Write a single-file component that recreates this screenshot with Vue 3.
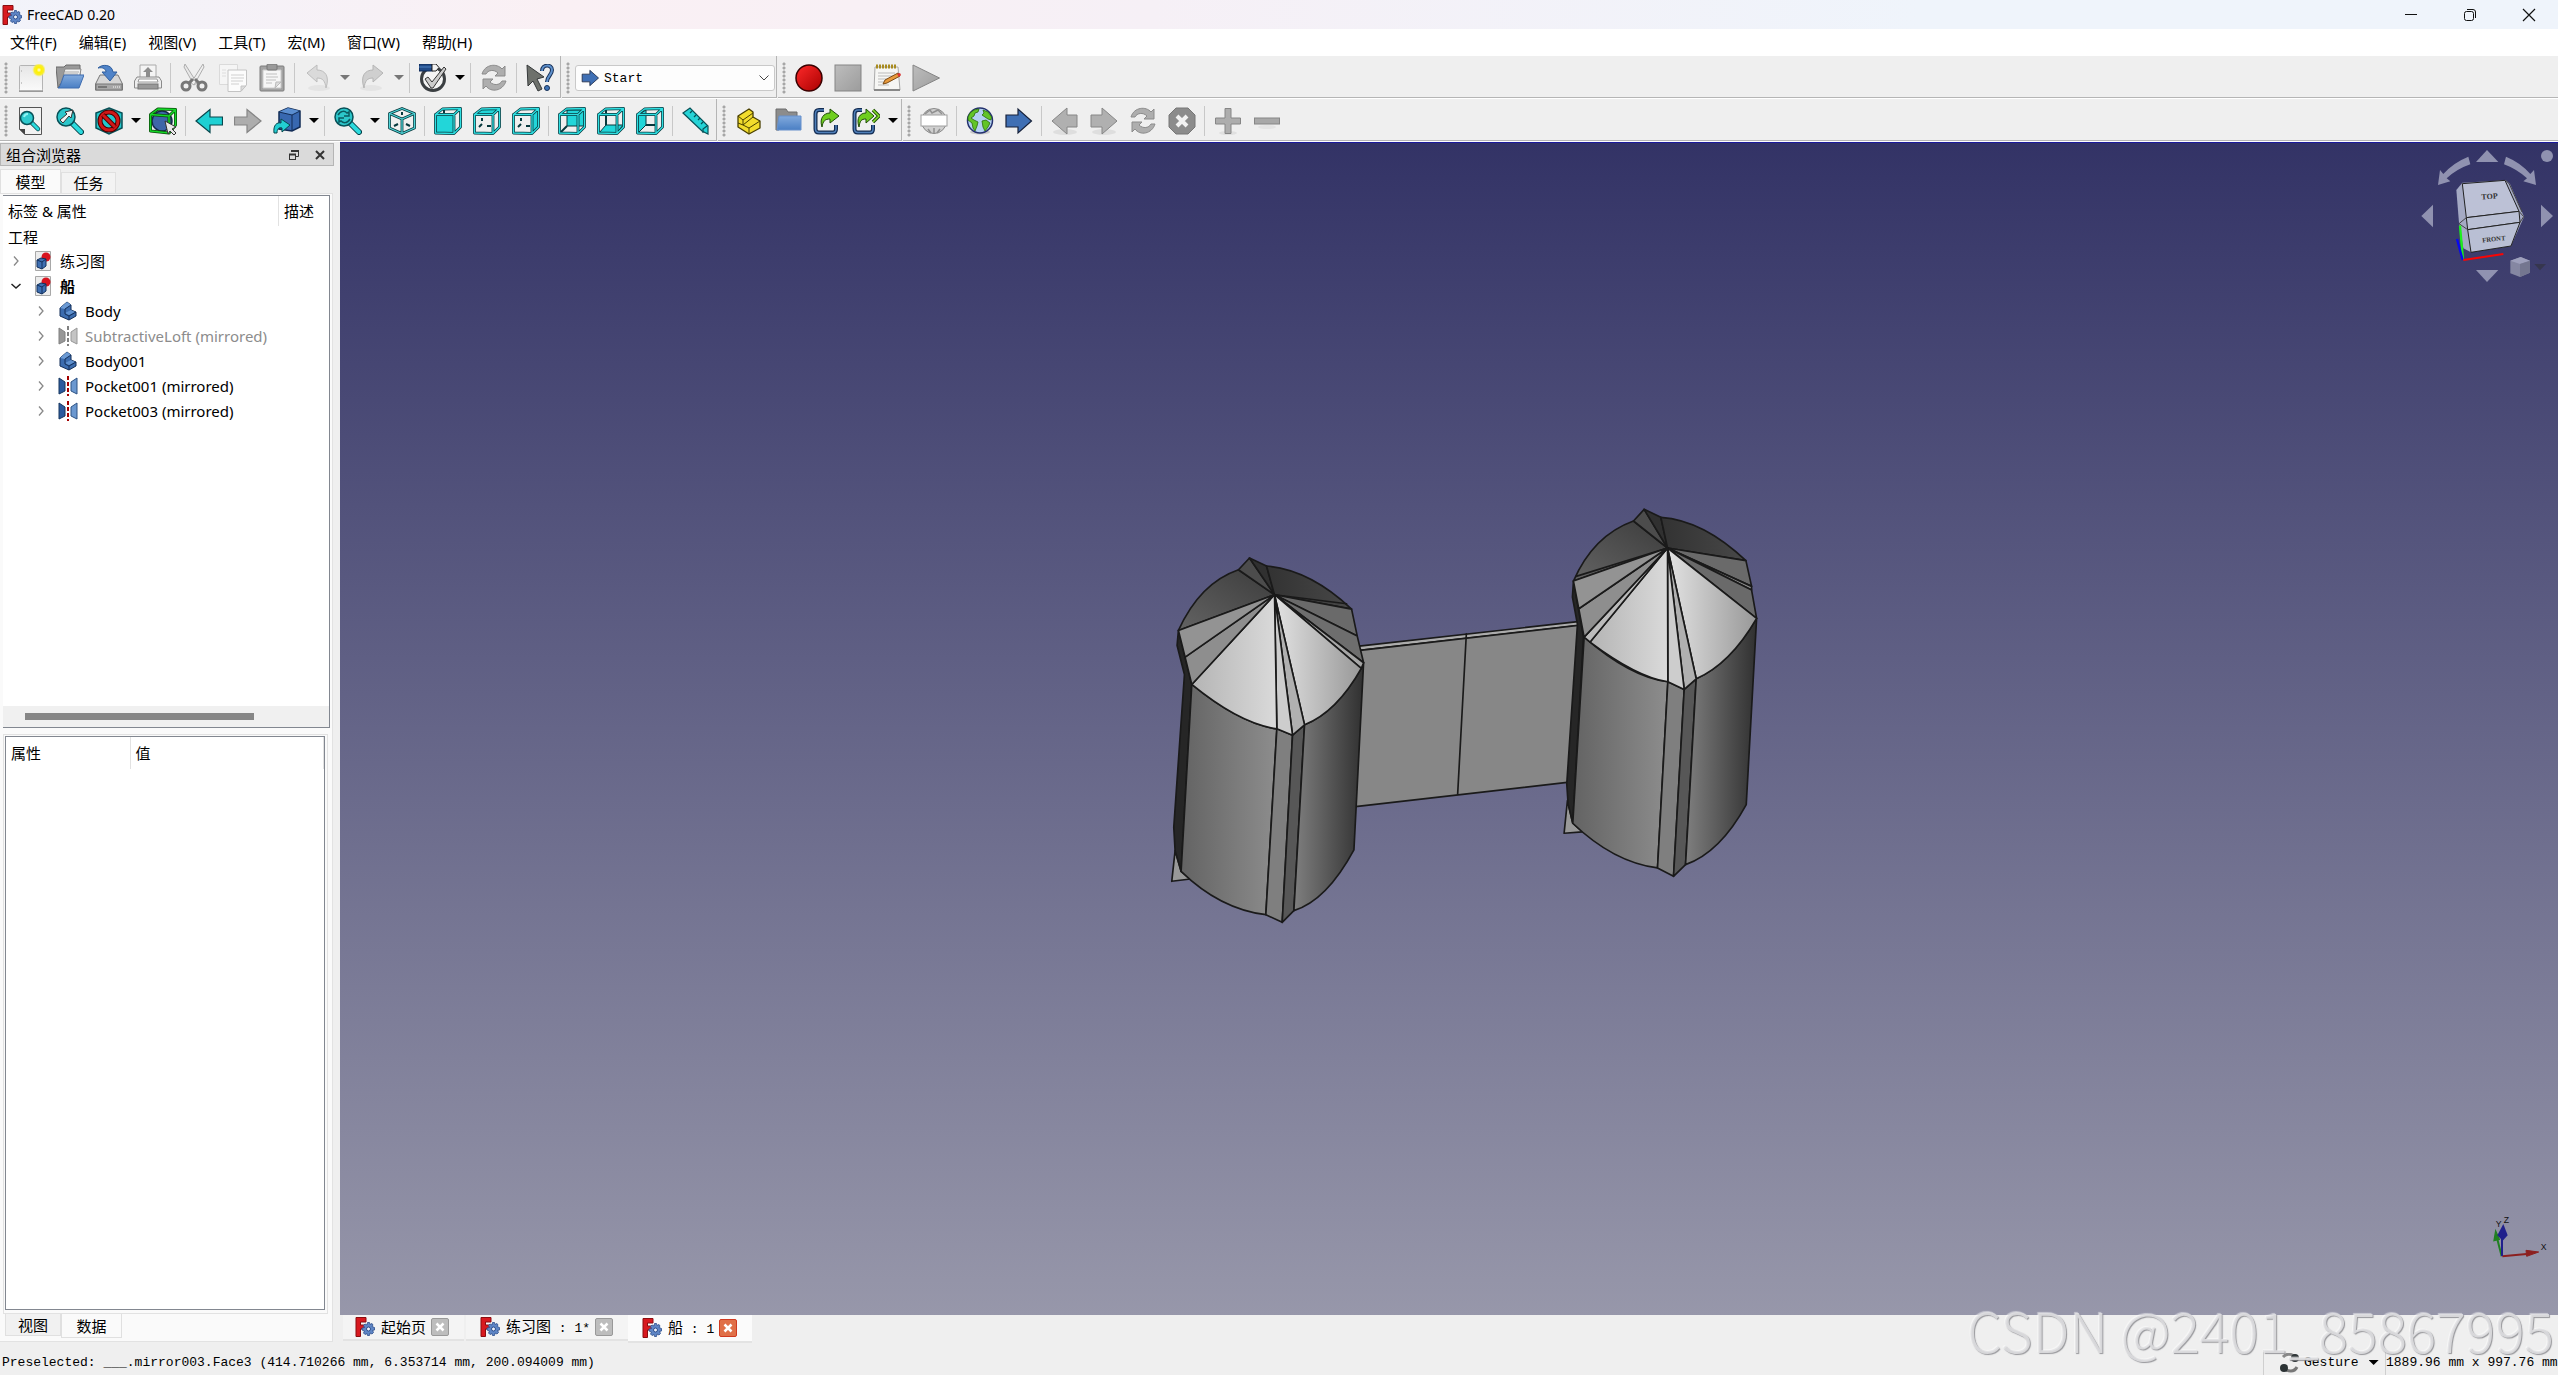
<script setup>
import { ref } from 'vue'

const menus = ['文件(F)', '编辑(E)', '视图(V)', '工具(T)', '宏(M)', '窗口(W)', '帮助(H)']

const b = (icon, label, menu) => ({ icon, label, menu })
const sep = { sep: true }

const fileTools = [
  b('new', '新建'), b('open', '打开'), b('save', '保存'), b('print', '打印'), sep,
  b('cut', '剪切'), b('copy', '复制'), b('paste', '粘贴'), sep,
  b('undo', '撤销', 'faint'), b('redo', '重做', 'faint'), sep,
  b('check', '检查', 'solid'), sep,
  b('refresh', '刷新'), sep,
  b('whats', '这是什么')
]
const macroTools = [b('record', '录制宏'), b('stop', '停止录制'), b('macro', '宏'), b('play', '执行宏')]
const viewTools = [
  b('fitall', '显示全部'), b('fitsel', '显示选择'), b('style', '显示样式', 'solid'), b('bbox', '边界框'), sep,
  b('back', '后退'), b('forward', '前进'), b('golink', '转到链接', 'solid'), sep,
  b('sync', '同步视图', 'solid'), b('iso', '轴测图'), sep,
  b('front', '前视'), b('top', '俯视'), b('right', '右视'), sep,
  b('rear', '后视'), b('bottom', '仰视'), b('left', '左视'), sep,
  b('ruler', '测量')
]
const structTools = [b('part', '部件'), b('group', '组'), b('link', '链接'), b('linkgroup', '链接组', 'solid')]
const webTools = [
  b('web', '网址'), sep, b('globe', '打开网站'), b('startarrow', '起始页'), sep,
  b('prev', '上一页'), b('next', '下一页'), b('refresh', '刷新'), b('halt', '停止'), sep,
  b('plus', '放大'), b('minus', '缩小')
]

const rows = [
  [{ tools: fileTools }, { combo: true, tools: [] }, { tools: macroTools, last: true }],
  [{ tools: viewTools }, { tools: structTools }, { tools: webTools, last: true }]
]

const tree = [
  { text: '练习图', icon: 'doc', level: 0 },
  { text: '船', icon: 'doc', level: 0, open: true, bold: true },
  { text: 'Body', icon: 'body', level: 1 },
  { text: 'SubtractiveLoft (mirrored)', icon: 'mirrorgray', level: 1, gray: true },
  { text: 'Body001', icon: 'body', level: 1 },
  { text: 'Pocket001 (mirrored)', icon: 'mirror', level: 1 },
  { text: 'Pocket003 (mirrored)', icon: 'mirror', level: 1 }
]

const docs = [
  { name: '起始页', tail: '' },
  { name: '练习图', tail: ' : 1*' },
  { name: '船', tail: ' : 1', active: true }
]
const workbench = ref('Start')
</script>

<template>
  <div class="app">
    <svg class="defs" width="0" height="0" aria-hidden="true">
      <defs>
        <linearGradient id="gBlue" x1="0" y1="0" x2="0" y2="1"><stop offset="0" stop-color="#82aadd" /><stop offset="1" stop-color="#4a7fc4" /></linearGradient>
        <linearGradient id="gGray" x1="0" y1="0" x2="1" y2="1"><stop offset="0" stop-color="#bdbdbd" /><stop offset="1" stop-color="#9c9c9c" /></linearGradient>
        <linearGradient id="gRed" x1="0" y1="0" x2="1" y2="1"><stop offset="0" stop-color="#ff2a2a" /><stop offset="1" stop-color="#a80000" /></linearGradient>
        <linearGradient id="gPage" x1="0" y1="0" x2="0" y2="1"><stop offset="0" stop-color="#e6e6e6" /><stop offset="1" stop-color="#fafafa" /></linearGradient>
        <radialGradient id="gSun"><stop offset="0" stop-color="#fffde0" /><stop offset=".35" stop-color="#fff000" /><stop offset=".7" stop-color="#f8ee30" /><stop offset="1" stop-color="#f8f080" stop-opacity="0" /></radialGradient>
        <linearGradient id="cLeft"><stop offset="0" stop-color="#b4b4b4" /><stop offset="1" stop-color="#dadada" /></linearGradient>
        <linearGradient id="cRight"><stop offset="0" stop-color="#e2e2e2" /><stop offset="1" stop-color="#989898" /></linearGradient>
        <linearGradient id="cBackL" x1="0" y1="1" x2="1" y2="0"><stop offset="0" stop-color="#636363" /><stop offset="1" stop-color="#3c3c3c" /></linearGradient>
        <linearGradient id="cBackR"><stop offset="0" stop-color="#323232" /><stop offset="1" stop-color="#484848" /></linearGradient>
        <linearGradient id="wLeft"><stop offset="0" stop-color="#636363" /><stop offset="1" stop-color="#8d8d8d" /></linearGradient>
        <linearGradient id="wRight"><stop offset="0" stop-color="#7f7f7f" /><stop offset="1" stop-color="#303030" /></linearGradient>
      </defs>

      <symbol id="i-logo" viewBox="0 0 20 20">
        <path d="M1 .500H11V5H5.500V8H9.500V12H5.500V19.500H1Z" fill="#d8191f" stroke="#8a0d10" />
        <path d="M12.500 5.500H14.500L15 7.500L17 6.500L18 8L17 9.500L19.500 10.500V13L17.500 13.500L18.500 15.500L17 17L15 16L14.500 18.500H12.500L12 16.500L10 17.500L8.500 16L9.500 14L7 13V11L9.500 10.500L8.500 8.500L10 7L12 8Z" fill="#5f86c6" stroke="#2c4d8a" stroke-width=".800" />
        <circle cx="13.500" cy="12" r="2" fill="#eef2fa" stroke="#2c4d8a" />
      </symbol>

      <symbol id="i-new" viewBox="0 0 28 28">
        <path d="M2 27H26" stroke="#9a9a9a" stroke-width="2" /><rect x="2.500" y="1.500" width="23" height="25" rx="1" fill="url(#gPage)" stroke="#b4b4b4" />
        <path d="M4.500 6V8M4.500 18V20" stroke="#c8c8c8" /><circle cx="22" cy="6" r="7" fill="url(#gSun)" />
      </symbol>
      <symbol id="i-open" viewBox="0 0 28 28">
        <path d="M0 3H8L10 1H24V20H4L2 24Z" fill="#9a9a9a" stroke="#6b6b6b" /><path d="M9 5H25L23 16H6Z" fill="#f2f2f2" stroke="#888" /><path d="M9 8H23M8 10H22" stroke="#aaa" />
        <path d="M8 11H28L23 24H2L4 22Z" fill="url(#gBlue)" stroke="#3e6cb0" />
      </symbol>
      <symbol id="i-save" viewBox="0 0 28 28">
        <path d="M5 11H23L27.500 20V26H.500V20Z" fill="#d6d6d6" stroke="#777" /><rect x="1" y="20" width="26" height="6" fill="#a8a8a8" stroke="#777" /><path d="M3 23H12" stroke="#777" stroke-width="2" /><path d="M18 23H25" stroke="#d0d0d0" stroke-width="2" stroke-dasharray="1 1" />
        <path d="M3 4C7 0 17 0 18 8H22L15 17L7 8H11C11 5 8 3 3 4Z" fill="#4f83c8" stroke="#315f9e" />
      </symbol>
      <symbol id="i-print" viewBox="0 0 28 28">
        <path d="M6 1H22V16H6Z" fill="#f4f4f4" stroke="#aaa" /><path d="M14 3L19 8H16V13H12V8H9Z" fill="#8d8d8d" /><path d="M3 13H25L27.500 17V24H.500V17Z" fill="#ededed" stroke="#8a8a8a" /><path d="M5 15H23L24 18H4Z" fill="#fff" stroke="#999" /><rect x="4" y="20" width="20" height="5" fill="#999" stroke="#777" />
      </symbol>
      <symbol id="i-cut" viewBox="0 0 28 28">
        <path d="M5 0L17 19L14 21L4 3Z" fill="#e8e8e8" stroke="#adadad" /><path d="M23 0L11 19L14 21L24 3Z" fill="#f0f0f0" stroke="#adadad" /><circle cx="6" cy="22" r="4" fill="none" stroke="#777" stroke-width="3" /><circle cx="22" cy="22" r="4" fill="none" stroke="#777" stroke-width="3" /><path d="M9 19L13 15M19 19L15 15" stroke="#777" stroke-width="3" />
      </symbol>
      <symbol id="i-copy" viewBox="0 0 28 28">
        <path d="M.500.500H18.500V20.500H.500Z" fill="#f5f5f5" stroke="#dadada" /><path d="M3 6H7M3 9H7M3 12H7" stroke="#ddd" /><path d="M9 6H27.500V21L22 27.500H9Z" fill="#fcfcfc" stroke="#c4c4c4" /><path d="M12 11H25M12 14H25M12 17H24M12 20H20" stroke="#d0d0d0" /><path d="M22 27V22H27Z" fill="#ddd" stroke="#c4c4c4" />
      </symbol>
      <symbol id="i-paste" viewBox="0 0 28 28">
        <rect x="2" y="2" width="24" height="25" rx="1" fill="#a3a3a3" stroke="#7d7d7d" /><path d="M5 6H23V24H5Z" fill="#f6f6f6" stroke="#ccc" /><rect x="9" y="0" width="10" height="6" rx="1" fill="#9a9a9a" stroke="#777" /><path d="M8 10H19M8 13H20M8 16H18M8 19H14" stroke="#c0c0c0" /><path d="M17 24L18 18H23Z" fill="#ddd" stroke="#bbb" />
      </symbol>
      <symbol id="i-undo" viewBox="0 0 28 28">
        <ellipse cx="15" cy="24" rx="11" ry="3" fill="#e4e4e4" /><path d="M3 9L13 1V6C21 6 26 12 22 24C21 17 19 14 13 14V18Z" fill="#dadada" stroke="#bdbdbd" />
      </symbol>
      <symbol id="i-redo" viewBox="0 0 28 28">
        <ellipse cx="13" cy="24" rx="11" ry="3" fill="#e4e4e4" /><path d="M25 9L15 1V6C7 6 2 12 6 24C7 17 9 14 15 14V18Z" fill="#cfcfcf" stroke="#b5b5b5" />
      </symbol>
      <symbol id="i-check" viewBox="0 0 28 28">
        <circle cx="14" cy="15" r="11.500" fill="#f4f4f4" stroke="#3b3f42" stroke-width="3" /><rect x="0" y="0" width="13" height="7" fill="#204a87" stroke="#0b2550" /><path d="M0 3H13" stroke="#4d80c0" /><path d="M13 0H17L20 3.500L17 7H13Z" fill="#f2f2f2" stroke="#222" /><path d="M6 15L9 13L13 18L25 3L27 5L14 24H12Z" fill="#ccc" stroke="#333" />
      </symbol>
      <symbol id="i-refresh" viewBox="0 0 28 28">
        <path d="M2 10C5 0 17-1 22 5L25 2V12H15L18 9C14 5 8 6 6 10Z" fill="#aeaeae" stroke="#8b8b8b" /><path d="M26 17C23 27 11 29 6 22L3 25V15H13L10 18C14 22 20 21 22 17Z" fill="#aeaeae" stroke="#8b8b8b" />
      </symbol>
      <symbol id="i-whats" viewBox="0 0 28 28">
        <path d="M1 1L18 13L11 15L16 25L12 27L7 17L2 22Z" fill="#6e716c" stroke="#35393a" /><path d="M16 7C16 0 26 0 26 6C26 11 21 12 21 18" fill="none" stroke="#173057" stroke-width="4" /><path d="M16 7C16 0 26 0 26 6C26 11 21 12 21 18" fill="none" stroke="#5d90cc" stroke-width="2" /><circle cx="21" cy="24" r="2.500" fill="#3d74b8" stroke="#173057" />
      </symbol>
      <symbol id="i-record" viewBox="0 0 28 28"><circle cx="14" cy="14" r="13" fill="url(#gRed)" stroke="#3a0000" stroke-width="1.500" /></symbol>
      <symbol id="i-stop" viewBox="0 0 28 28"><rect x="1" y="1" width="26" height="26" fill="url(#gGray)" stroke="#858585" /></symbol>
      <symbol id="i-macro" viewBox="0 0 28 28">
        <path d="M2 3H25L27 26H1Z" fill="#f6f6f4" stroke="#aaa" /><path d="M1 26H27" stroke="#888" stroke-width="2" /><path d="M3 2.500H24" stroke="#a88b20" stroke-width="4" stroke-dasharray="2 1" /><path d="M5 9H22M5 12H22M5 15H20M5 18H12M5 21H16" stroke="#bbb" /><path d="M10 20L12 16L25 9L27 12L14 19Z" fill="#e89a3c" stroke="#7a4a14" /><path d="M24 10L27 9L28 11L26 13Z" fill="#d33" />
      </symbol>
      <symbol id="i-play" viewBox="0 0 28 28"><path d="M1 1L27.500 14L1 27Z" fill="url(#gGray)" stroke="#858585" /></symbol>

      <symbol id="i-fitall" viewBox="0 0 28 28">
        <path d="M2.500.500H24.500V27.500H8L2.500 22Z" fill="#f2f2f2" stroke="#555" /><path d="M2 22H8V28Z" fill="#444" /><path d="M14 15L21 22" stroke="#063f46" stroke-width="4.500" stroke-linecap="round" /><path d="M14 15L21 22" stroke="#2cdadd" stroke-width="3" stroke-linecap="round" /><circle cx="10" cy="11" r="6.500" fill="#2fc9cd" stroke="#075057" stroke-width="1.500" /><path d="M7 10A4 4 0 0 1 11 7" stroke="#8ff4f4" stroke-width="2" fill="none" />
      </symbol>
      <symbol id="i-fitsel" viewBox="0 0 28 28">
        <path d="M15 15L25 25" stroke="#063f46" stroke-width="6" stroke-linecap="round" /><path d="M15 15L25 25" stroke="#2cdadd" stroke-width="4" stroke-linecap="round" /><circle cx="10" cy="10" r="9" fill="#2cc6ca" stroke="#075057" stroke-width="1.500" /><path d="M4 13L11 7L9 5L17 3L15 11L13 9L7 16Z" fill="#f4f4f4" stroke="#333" />
      </symbol>
      <symbol id="i-style" viewBox="0 0 28 28">
        <path d="M14 1L27 6V21L14 27L1 21V6Z" fill="#22c8cc" stroke="#075057" stroke-width="1.500" /><circle cx="14" cy="14" r="9" fill="none" stroke="#4c0000" stroke-width="5" /><circle cx="14" cy="14" r="9" fill="none" stroke="#d01818" stroke-width="3" /><path d="M8 8L20 20" stroke="#4c0000" stroke-width="5" /><path d="M8 8L20 20" stroke="#d01818" stroke-width="3" />
      </symbol>
      <symbol id="i-bbox" viewBox="0 0 28 28">
        <circle cx="13" cy="14" r="10" fill="#3e66a8" stroke="#14284a" stroke-width="1.500" /><g fill="none" stroke-linejoin="round"><path d="M1.500 7.500L20 9V26L1.500 24ZM1.500 7.500L9 2L26.500 2.500L20 9M26.500 2.500V18L20 26" stroke="#0a4a0a" stroke-width="3" /><path d="M1.500 7.500L20 9V26L1.500 24ZM1.500 7.500L9 2L26.500 2.500L20 9M26.500 2.500V18L20 26" stroke="#14d628" stroke-width="1.500" /></g><path d="M16 14L27 20L23 22L27 26L25 28L21 24L19 27Z" fill="#e8e8e8" stroke="#333" />
      </symbol>
      <symbol id="i-back" viewBox="0 0 28 28"><path d="M1 14L15 2.500V10H27.500V18H15V25.500Z" fill="#1fd0d3" stroke="#08474c" stroke-width="1.200" /></symbol>
      <symbol id="i-forward" viewBox="0 0 28 28"><path d="M27 14L13 2.500V10H.500V18H13V25.500Z" fill="#adadad" stroke="#858585" stroke-width="1.200" /></symbol>
      <symbol id="i-golink" viewBox="0 0 28 28">
        <path d="M6 5L15 1L27 4V20L19 24L6 22Z" fill="#3868b0" stroke="#122c56" stroke-width="1.500" /><path d="M6 5L15 1L27 4L19 8Z" fill="#5a8ed0" /><path d="M6 5L19 8L27 4M19 8V24" stroke="#122c56" fill="none" /><path d="M1 26C0 18 4 15 8 16V12L17 18L9 25V21C6 20 4 22 4 26Z" fill="#22ced2" stroke="#08474c" />
      </symbol>
      <symbol id="i-sync" viewBox="0 0 28 28">
        <path d="M15 15L25 25" stroke="#063f46" stroke-width="6" stroke-linecap="round" /><path d="M15 15L25 25" stroke="#2cdadd" stroke-width="4" stroke-linecap="round" /><circle cx="10" cy="10" r="9" fill="#2cc6ca" stroke="#075057" stroke-width="1.500" /><path d="M4 8C7 3 11 4 13 6L15 5V9H10M16 12C13 17 9 16 7 14L5 15V11H10" fill="none" stroke="#0b5a60" stroke-width="1.500" />
      </symbol>
      <symbol id="edges" viewBox="0 0 28 28">
        <g fill="none" stroke-linejoin="round"><path d="M1.500 7.500H20V26.500L1.500 26ZM1.500 7.500L8.500 2L26.500 1.500L20 7.500M26.500 1.500V20L20 26.500" stroke="#06383d" stroke-width="2.800" /><path d="M1.500 7.500H20V26.500L1.500 26ZM1.500 7.500L8.500 2L26.500 1.500L20 7.500M26.500 1.500V20L20 26.500" stroke="#2fe0e3" stroke-width="1.300" /></g>
      </symbol>
      <symbol id="i-iso" viewBox="0 0 28 28">
        <g fill="none" stroke-linejoin="round"><path d="M14 1.500L26.500 6.500V21L14 26.500L1.500 21V6.500ZM1.500 6.500L14 12L26.500 6.500M14 12V26" stroke="#06383d" stroke-width="2.800" /><path d="M14 1.500L26.500 6.500V21L14 26.500L1.500 21V6.500ZM1.500 6.500L14 12L26.500 6.500M14 12V26" stroke="#4fd5d8" stroke-width="1.300" /><path d="M14 5V8M6 19L10 17M22 19L18 17" stroke="#06383d" stroke-width="2" /></g>
      </symbol>
      <symbol id="i-front" viewBox="0 0 28 28"><path d="M2 8H20V26H2Z" fill="#22d6d9" /><path d="M10 3V7" stroke="#06383d" stroke-width="2" /><use href="#edges" /></symbol>
      <symbol id="i-top" viewBox="0 0 28 28"><path d="M2 8L8 2H26L20 8Z" fill="#22d6d9" /><path d="M9 11V14M9 17L6 20M14 19H18" stroke="#06383d" stroke-width="2" /><use href="#edges" /></symbol>
      <symbol id="i-right" viewBox="0 0 28 28"><path d="M20 8L26 2V20L20 26Z" fill="#22d6d9" /><path d="M9 11V14M9 17L6 20M14 19H18" stroke="#06383d" stroke-width="2" /><use href="#edges" /></symbol>
      <symbol id="i-rear" viewBox="0 0 28 28"><path d="M9 3H26V19H9Z" fill="#22d6d9" stroke="#06383d" /><path d="M9 19L2 26" stroke="#06383d" stroke-width="2" /><use href="#edges" /></symbol>
      <symbol id="i-bottom" viewBox="0 0 28 28"><path d="M2 26L9 18H26L20 26Z" fill="#22d6d9" stroke="#06383d" /><path d="M9 3V18" stroke="#06383d" stroke-width="2" /><use href="#edges" /></symbol>
      <symbol id="i-left" viewBox="0 0 28 28"><path d="M2 8L10 3V18L2 26Z" fill="#22d6d9" stroke="#06383d" /><path d="M10 18H20" stroke="#06383d" stroke-width="2" /><use href="#edges" /></symbol>
      <symbol id="i-ruler" viewBox="0 0 28 28"><path d="M1 6L8 1L26 19V27L20 24Z" fill="#25d3d6" stroke="#075057" stroke-width="1.200" /><path d="M10 4L8 6M14 8L12 10M18 11L16 13M21 15L19 17M25 19L21 22V26" stroke="#075057" stroke-width="1.200" fill="none" /></symbol>

      <symbol id="i-part" viewBox="0 0 28 28">
        <path d="M3 9L14 2L18 5V10L25 14V21L14 27L3 20Z" fill="#f2dc2c" stroke="#4a4000" stroke-width="1.300" stroke-linejoin="round" /><path d="M3 9L8 13L18 6M8 13V18L3 16M8 18L14 21V27M14 21L25 14M8 18L18 10" stroke="#4a4000" fill="none" />
      </symbol>
      <symbol id="i-group" viewBox="0 0 28 28"><path d="M2 2H12L14 5H23V14H5V23H2Z" fill="#8c8c8c" stroke="#6c6c6c" /><path d="M5 9H27V23H3Z" fill="url(#gBlue)" stroke="#6690cc" /></symbol>
      <symbol id="i-link" viewBox="0 0 28 28">
        <path d="M11 3H6Q2.500 3 2.500 7V22Q2.500 25.500 6 25.500H20Q23 25.500 23 22V18" fill="none" stroke="#132c52" stroke-width="4" /><path d="M11 3H6Q2.500 3 2.500 7V22Q2.500 25.500 6 25.500H20Q23 25.500 23 22V18" fill="none" stroke="#4f7fb9" stroke-width="1.500" /><path d="M9 20C6 11 11 6 17 6V2L26 9L17 16V12C12 12 10 14 9 20Z" fill="#6fce1e" stroke="#1f4d06" />
      </symbol>
      <symbol id="i-linkgroup" viewBox="0 0 28 28">
        <path d="M10 3H6Q2.500 3 2.500 7V22Q2.500 25.500 6 25.500H18Q21 25.500 21 22V18" fill="none" stroke="#132c52" stroke-width="4" /><path d="M10 3H6Q2.500 3 2.500 7V22Q2.500 25.500 6 25.500H18Q21 25.500 21 22V18" fill="none" stroke="#4f7fb9" stroke-width="1.500" /><path d="M7 20C4 11 8 6 14 6V2L22 9L14 16V12C9 12 8 14 7 20Z" fill="#6fce1e" stroke="#1f4d06" /><path d="M21 3L27 9L21 15" fill="none" stroke="#1f4d06" stroke-width="3.500" /><path d="M21 3L27 9L21 15" fill="none" stroke="#8be030" stroke-width="1.500" />
      </symbol>
      <symbol id="i-web" viewBox="0 0 28 28"><circle cx="14" cy="14" r="12.500" fill="#cfcfcf" stroke="#888" /><path d="M5 7L10 3L12 6L18 3L22 7M8 22L11 26M20 22L17 26M14 21V26" stroke="#909090" fill="none" stroke-width="1.500" /><rect x="1" y="8" width="26" height="11" fill="#fff" stroke="#a0a0a0" /></symbol>
      <symbol id="i-globe" viewBox="0 0 28 28"><ellipse cx="14" cy="25" rx="10" ry="2.500" fill="#c9c9c9" /><circle cx="14" cy="13.500" r="12.500" fill="#b4d0f2" stroke="#23306e" stroke-width="1.500" /><path d="M2 10L4 6L8 3L13 2L12 5L9 6L8 9L5 11L8 13L12 15L11 19L9 24L7 21L6 16L2 13Z" fill="#62c428" stroke="#2a6c0a" stroke-width=".800" /><path d="M17 3L22 5L25.500 10L25 13L22 12L19 10L16 8L18 6ZM16 14L20 13L24 16L22 20L19 24L17 20Z" fill="#62c428" stroke="#2a6c0a" stroke-width=".800" /></symbol>
      <symbol id="i-startarrow" viewBox="0 0 28 28"><path d="M1 8H13V2L26.500 14L13 26V20H1Z" fill="#3f6fb4" stroke="#16213a" stroke-width="1.200" /></symbol>
      <symbol id="i-prev" viewBox="0 0 28 28"><ellipse cx="14" cy="25" rx="12" ry="3" fill="#dedede" /><path d="M1 14L16 1V8H26V20H16V27Z" fill="#b0b0b0" stroke="#868686" /></symbol>
      <symbol id="i-next" viewBox="0 0 28 28"><ellipse cx="14" cy="25" rx="12" ry="3" fill="#dedede" /><path d="M27 14L12 1V8H1V20H12V27Z" fill="#b0b0b0" stroke="#868686" /></symbol>
      <symbol id="i-halt" viewBox="0 0 28 28"><path d="M8 1H20L27 8V20L20 27H8L1 20V8Z" fill="#8c8c8c" stroke="#777" /><path d="M9 9L19 19M19 9L9 19" stroke="#f2f2f2" stroke-width="4" /></symbol>
      <symbol id="i-plus" viewBox="0 0 28 28"><ellipse cx="14" cy="26" rx="9" ry="2" fill="#e0e0e0" /><path d="M11 1.500H17V11H26.500V17H17V26.500H11V17H1.500V11H11Z" fill="#adadad" stroke="#868686" /></symbol>
      <symbol id="i-minus" viewBox="0 0 28 28"><ellipse cx="14" cy="20" rx="9" ry="2" fill="#e4e4e4" /><rect x="1.500" y="11" width="25" height="6" fill="#a8a8a8" stroke="#868686" /></symbol>

      <symbol id="i-doc" viewBox="0 0 20 20"><path d="M2.500.500H17.500V19.500H2.500Z" fill="#ececec" stroke="#a8a8a8" /><circle cx="13" cy="6" r="4.500" fill="#d81420" /><path d="M4 9L8 7L13 8V15L9 18L4 16Z" fill="#3e6fb2" stroke="#12305c" /><path d="M4 9L9 11L13 8M9 11V18" fill="none" stroke="#12305c" /></symbol>
      <symbol id="i-body" viewBox="0 0 20 20"><path d="M2 7L9 1L13 4V9L18 11V15L11 19L2 15Z" fill="#3c6cae" stroke="#142f58" /><path d="M2 7L9 1L13 4L7 8Z" fill="#6b9ad4" /><path d="M7 12L13 9L17 11L11 14Z" fill="#5f90ce" /><path d="M7 8L13 4M7 8V13L11 15L18 11M11 15V19" stroke="#142f58" fill="none" /></symbol>
      <symbol id="i-mirror" viewBox="0 0 20 20"><path d="M1 2L7 6V15L1 18Z" fill="#2c5a9e" stroke="#17365f" /><path d="M19 2L13 6V15L19 18Z" fill="#6b98d0" stroke="#2e5384" /><path d="M10 0V20" stroke="#a40000" stroke-width="2" stroke-dasharray="4 2" /></symbol>
      <symbol id="i-mirrorgray" viewBox="0 0 20 20"><path d="M1 2L7 6V15L1 18Z" fill="#989898" stroke="#808080" /><path d="M19 2L13 6V15L19 18Z" fill="#c4c4c4" stroke="#989898" /><path d="M10 0V20" stroke="#808080" stroke-width="2" stroke-dasharray="4 2" /></symbol>
    </svg>

    <header class="title">
      <svg class="logo"><use href="#i-logo" /></svg>
      <span class="name">FreeCAD 0.20</span>
      <div class="win">
        <button aria-label="最小化"><svg width="14" height="14"><path d="M1 6.500H13" stroke="#111" /></svg></button>
        <button aria-label="还原"><svg width="14" height="14" fill="none" stroke="#111"><rect x="1.500" y="3.500" width="9" height="9" rx="2" /><path d="M4 1.500H10Q12.500 1.500 12.500 4V10" /></svg></button>
        <button aria-label="关闭"><svg width="14" height="14"><path d="M1 1L13 13M13 1L1 13" stroke="#111" stroke-width="1.200" /></svg></button>
      </div>
    </header>

    <nav class="menu"><button v-for="m in menus" :key="m">{{ m }}</button></nav>

    <div v-for="(row, r) in rows" :key="r" class="toolrow">
      <div v-for="(g, n) in row" :key="n" class="group" :class="{ last: g.last }">
        <i class="grip"></i>
        <label v-if="g.combo" class="combo">
          <svg class="comboicon"><use href="#i-startarrow" /></svg>
          <select v-model="workbench" aria-label="工作台"><option>Start</option></select>
          <svg class="chev" width="10" height="6"><path d="M.500.500L5 5L9.500.500" fill="none" stroke="#444" /></svg>
        </label>
        <template v-for="(t, k) in g.tools" :key="k">
          <i v-if="t.sep" class="sep"></i>
          <button v-else class="tool" :class="{ wide: t.menu }" :aria-label="t.label">
            <svg class="ic"><use :href="'#i-' + t.icon" /></svg>
            <i v-if="t.menu" class="caret" :class="t.menu"></i>
          </button>
        </template>
      </div>
    </div>

    <main class="main">
      <aside class="side">
        <div class="docktitle">
          <span>组合浏览器</span>
          <button aria-label="浮动"><svg width="12" height="12"><path d="M3.500 3V1.500H10.500V7.500H8" fill="none" stroke="#333" /><path d="M3 2H11" stroke="#333" stroke-width="2" /><rect x="1.500" y="5.500" width="6" height="5" fill="none" stroke="#333" /><path d="M1 5.500H8" stroke="#333" stroke-width="2" /></svg></button>
          <button aria-label="关闭"><svg width="12" height="12"><path d="M2 2L10 10M10 2L2 10" stroke="#333" stroke-width="2" /></svg></button>
        </div>
        <div class="toptabs"><button class="on">模型</button><button>任务</button></div>
        <div class="panel">
          <section class="tree">
            <div class="thead"><span>标签 &amp; 属性</span><span>描述</span></div>
            <div class="root">工程</div>
            <ul>
              <li v-for="t in tree" :key="t.text" :class="['lv' + t.level, { bold: t.bold, gray: t.gray }]">
                <svg class="tw" width="12" height="12"><path v-if="t.open" d="M1.500 4L6 8L10.500 4" stroke="#222" stroke-width="1.500" fill="none" /><path v-else d="M4 1.500L8 6L4 10.500" stroke="#888" stroke-width="1.300" fill="none" /></svg>
                <svg class="ti"><use :href="'#i-' + t.icon" /></svg>
                <span>{{ t.text }}</span>
              </li>
            </ul>
            <div class="hscroll"><i></i></div>
          </section>
          <section class="props">
            <div class="propbox">
              <table><thead><tr><th>属性</th><th>值</th></tr></thead></table>
            </div>
          </section>
          <div class="bottomtabs"><button>视图</button><button class="on">数据</button></div>
        </div>
      </aside>

      <section class="work">
        <div class="scene">
          <svg class="model" viewBox="0 0 2218 1172" preserveAspectRatio="xMidYMid slice">
            <g stroke="#1a1a1a" stroke-width="5" stroke-linejoin="round" stroke-linecap="round">
              <g transform="translate(1010 458) scale(.333333)">
                <path d="M21 138L690 63V75L30 150Z" fill="#acacac" />
                <path d="M30 150L690 74V541L10 619Z" fill="#878787" />
                <path d="M349 100L323 580" />
              </g>
              <g transform="translate(810 398) scale(.333333)">
                <path d="M76 930L66 1022L122 1015L94 992Z" fill="#999" />
                <path d="M86 270L82 315L104 402L72 860L76 930L94 992L126 432Z" fill="#262626" />
                <path d="M126 432Q270 550 381 565L348 1122Q210 1105 94 992Z" fill="url(#wLeft)" />
                <path d="M381 565L428 584L397 1145L348 1122Z" fill="#7f7f7f" />
                <path d="M428 584L464 553L432 1110L397 1145Z" fill="#575757" />
                <path d="M464 553Q560 515 634 384L641 367L612 928Q530 1080 432 1110Z" fill="url(#wRight)" />
                <path d="M374 163L86 270Q150 128 266 88Z" fill="url(#cBackL)" />
                <path d="M374 163L266 88L299 53Z" fill="#4c4c4c" />
                <path d="M374 163L299 53L350 77Z" fill="#303030" />
                <path d="M374 163L350 77Q480 88 605 206Z" fill="url(#cBackR)" />
                <path d="M374 163L590 190" />
                <path d="M374 163L605 206L622 287Z" fill="#6a6a6a" />
                <path d="M374 163L622 287L641 367Z" fill="#6e6e6e" />
                <path d="M374 163L641 367L634 384Z" fill="#a6a6a6" />
                <path d="M374 163L634 384Q560 515 464 553Z" fill="url(#cRight)" />
                <path d="M374 163L464 553L428 584Z" fill="#b0b0b0" />
                <path d="M374 163L428 584L381 565Z" fill="#cdcdcd" />
                <path d="M374 163L381 565Q270 550 126 432Z" fill="url(#cLeft)" />
                <path d="M374 163L126 432L106 350Z" fill="#8e8e8e" />
                <path d="M374 163L106 350L86 270Z" fill="#939393" />
              </g>
              <g transform="translate(1200 348) scale(.333333)">
                <path d="M82 930L72 1028L127 1024L98 998Z" fill="#999" />
                <path d="M100 272L97 320L112 402L80 880L84 940L98 998L130 440Z" fill="#262626" />
                <path d="M132 440Q270 560 383 574L352 1132Q220 1115 98 998Z" fill="url(#wLeft)" />
                <path d="M383 574L432 597L400 1157L352 1132Z" fill="#7f7f7f" />
                <path d="M432 597L468 565L436 1122L400 1157Z" fill="#575757" />
                <path d="M468 565Q570 520 649 384L618 942Q540 1085 436 1122Z" fill="url(#wRight)" />
                <path d="M382 173L100 272Q160 135 280 92Z" fill="url(#cBackL)" />
                <path d="M382 173L108 258" />
                <path d="M382 173L280 92L312 57Z" fill="#4c4c4c" />
                <path d="M382 173L312 57L362 81Z" fill="#303030" />
                <path d="M382 173L362 81Q490 90 617 211Z" fill="url(#cBackR)" />
                <path d="M382 173L617 211L634 288Z" fill="#6a6a6a" />
                <path d="M382 173L634 288V299Z" fill="#8a8a8a" />
                <path d="M382 173L634 299L649 384Z" fill="#6a6a6a" />
                <path d="M382 173L649 384Q570 520 468 565Z" fill="url(#cRight)" />
                <path d="M382 173L468 565L432 597Z" fill="#b0b0b0" />
                <path d="M382 173L432 597L383 574Z" fill="#cdcdcd" />
                <path d="M382 173L383 574Q290 560 150 455Z" fill="url(#cLeft)" />
                <path d="M382 173L150 455L132 440Z" fill="#bbb" />
                <path d="M382 173L132 440L116 355Z" fill="#8e8e8e" />
                <path d="M382 173L116 355L100 272Z" fill="#939393" />
              </g>
            </g>
          </svg>

          <svg class="cube" viewBox="0 429 474 441">
            <g fill="#9092b0">
              <path d="M261 450L295 486H228Z" /><path d="M261 846L295 810H228Z" /><path d="M64 648L99 614V682Z" /><path d="M459 648L423 614V682Z" />
              <circle cx="441" cy="468" r="18" />
              <path d="M205 470L211 493Q170 507 140 535L151 544L114 555L120 510L130 522Q160 488 205 470Z" />
              <path d="M318 470L312 493Q350 507 381 535L370 544L408 555L402 510L391 522Q362 488 318 470Z" />
            </g>
            <path d="M169 570L187 548L317 541L330 552L372 650L333 738L213 757L190 745L177 668Z" fill="#a5aac4" />
            <path d="M187 551L315 541L357 634L199 653Z" fill="#bcc1d6" stroke="#222" stroke-width="3" />
            <path d="M199 653L357 634L360 667L203 689Z" fill="#b9bfd4" stroke="#222" stroke-width="3" />
            <path d="M203 689L360 667L333 738L213 757Z" fill="#b9bfd4" stroke="#222" stroke-width="3" />
            <path d="M199 653L177 671L203 689M357 634L371 650L360 667M317 541L328 552L366 636" fill="none" stroke="#444" stroke-width="3" />
            <text x="244" y="597" transform="rotate(-4 268 588)" font-size="24">TOP</text>
            <text x="246" y="724" transform="rotate(-6 280 715)" font-size="20">FRONT</text>
            <path d="M180 677L189 780" stroke="#1df01d" stroke-width="7" /><path d="M171 717L188 780" stroke="#0808f0" stroke-width="7" /><path d="M190 780L310 762" stroke="#fa0505" stroke-width="6" />
            <path d="M331 782L362 771L390 782V818L360 831L331 820Z" fill="#8587a2" /><path d="M331 782L362 771L390 782L360 792Z" fill="#9ea0bc" /><path d="M360 792L390 782V818L360 831Z" fill="#74768f" />
            <path d="M403 792H438L420 811Z" fill="#36364e" />
          </svg>

          <svg class="axes" viewBox="0 0 294 240">
            <path d="M125 169L112 118" stroke="#208020" stroke-width="6" /><path d="M107 93L118 118L102 122Z" fill="#208020" stroke="#208020" stroke-width="4" />
            <path d="M127 169L200 162" stroke="#8c2020" stroke-width="6" /><path d="M236 156L198 151L200 169Z" fill="#8c2020" stroke="#8c2020" stroke-width="3" />
            <path d="M126 168V115" stroke="#20208c" stroke-width="6" /><path d="M130 72L143 106L128 122L112 106Z" fill="#20208c" />
            <g font-size="26"><text x="107" y="82">Y</text><text x="131" y="68">Z</text><text x="242" y="151">X</text></g>
          </svg>
        </div>

        <div class="doctabs">
          <div v-for="d in docs" :key="d.name" class="doc" :class="{ on: d.active }">
            <svg class="logo"><use href="#i-logo" /></svg>
            <span class="dn">{{ d.name }}<span v-if="d.tail" class="mono">{{ d.tail }}</span></span>
            <button class="x" aria-label="关闭"><svg width="10" height="10"><path d="M1.500 1.500L8.500 8.500M8.500 1.500L1.500 8.500" stroke="#fff" stroke-width="2.500" /></svg></button>
          </div>
        </div>
      </section>
    </main>

    <footer class="status">
      <span class="msg">Preselected: ___.mirror003.Face3 (414.710266 mm, 6.353714 mm, 200.094009 mm)</span>
      <button class="nav">
        <svg width="26" height="20"><path d="M3 4Q8-1 14 3" stroke="#888" stroke-width="3" fill="none" /><circle cx="15" cy="5" r="4" fill="#2b3234" /><path d="M6 17Q14 20 17 14" stroke="#777" stroke-width="3" fill="none" /><circle cx="4" cy="15" r="4" fill="#2b3234" /></svg>
        <span>Gesture</span><i class="caret solid"></i>
      </button>
      <span class="size">1889.96 mm x 997.76 mm</span>
    </footer>
    <div class="mark">CSDN @2401_85867995</div>
  </div>
</template>

<style>
body { margin: 0; }
</style>

<style scoped>
.app { position: relative; display: flex; flex-direction: column; min-height: 100vh; overflow: hidden; background: #efefef; color: #000; font: 15px/20px "Noto Sans", "Noto Sans CJK SC", sans-serif; }
.defs { position: absolute; }
button { appearance: none; border: 0; padding: 0; margin: 0; background: none; color: inherit; font: inherit; }
svg { display: block; flex: none; }
i { display: block; flex: none; }

.title { display: flex; align-items: center; height: 29px; background: linear-gradient(90deg, #f2f3fa, #faf0f4 22%, #f6f0f6 45%, #eff4fb 75%); }
.logo { width: 20px; height: 20px; }
.title .logo { margin-left: 2px; }
.name { flex: 1; margin-left: 5px; font-size: 14px; }
.win { display: flex; }
.win button { display: flex; align-items: center; justify-content: center; width: 59px; height: 29px; }

.menu { display: flex; gap: 22px; height: 27px; padding: 0 0 2px 10px; box-sizing: border-box; background: #fff; }

.toolrow { display: flex; height: 43px; }
.group { display: flex; align-items: center; box-sizing: border-box; height: 42px; border-bottom: 1px solid #b5b5b5; border-right: 1px solid #b5b5b5; box-shadow: 0 1px #fff; padding: 2px 1px 0 0; margin-right: 1px; }
.group.last { flex: 1; border-right: 0; margin-right: 0; }
.grip { width: 4px; height: 32px; margin: 0 3px 0 4px; background: radial-gradient(circle at 2px 2px, #a6a6a6 1px, transparent 2px) 0 0 / 4px 4px; }
.tool { display: flex; align-items: center; width: 39px; height: 40px; padding-left: 6px; box-sizing: border-box; flex: none; }
.tool.wide { width: 54px; }
.ic { width: 28px; height: 28px; }
.caret { width: 10px; height: 5px; background: #000; clip-path: polygon(0 0, 100% 0, 50% 100%); }
.wide .caret { margin-left: 8px; }
.caret.faint { background: #777; }
.sep { width: 1px; height: 30px; margin: 0 3px; background: #c8c8c8; }
.combo { position: relative; width: 200px; height: 26px; margin-left: 2px; }
.combo select { appearance: none; width: 200px; height: 26px; padding: 1px 0 0 28px; border: 1px solid #c9c9c9; border-radius: 3px; background: #fdfdfd; color: #000; font: 13px "Liberation Mono", monospace; }
.comboicon { position: absolute; left: 6px; top: 4px; width: 19px; height: 18px; }
.chev { position: absolute; right: 6px; top: 10px; }

.main { display: flex; flex: 1; }
.side { display: flex; flex-direction: column; width: 340px; flex: none; padding-top: 1px; box-sizing: border-box; }
.docktitle { display: flex; align-items: center; gap: 14px; height: 23px; margin-right: 6px; padding: 0 7px 0 5px; box-sizing: border-box; border: 1px solid #b5b5b5; background: #dadada; }
.docktitle span { flex: 1; }
.toptabs { display: flex; align-items: flex-end; height: 27px; }
.toptabs button { width: 55px; height: 21px; border: 1px solid #e0e0e0; border-bottom: 0; background: #f3f3f3; box-sizing: border-box; line-height: 18px; }
.toptabs .on, .bottomtabs .on { width: 61px; height: 24px; background: #fafafa; }
.panel { display: flex; flex: 1; flex-direction: column; margin: 0 7px 1px 0; padding: 1px 0 3px 3px; border: 1px solid #e2e2e2; border-left: 0; background: #fafafa; }
.tree { display: flex; flex: 535; flex-direction: column; margin-right: 2px; box-sizing: border-box; border: 1px solid #828790; border-left: 0; background: #fff; }
.thead { display: flex; height: 30px; line-height: 30px; }
.thead span { width: 44px; padding-left: 5px; }
.thead span:first-child { width: 276px; box-sizing: border-box; border-right: 1px solid #e2e2e2; padding-left: 5px; }
.root { height: 22px; line-height: 22px; padding-left: 5px; }
ul { flex: 1; list-style: none; margin: 0; padding: 0; }
li { display: flex; align-items: center; height: 25px; padding-left: 7px; }
li.lv1 { padding-left: 32px; }
.tw { margin-right: 11px; }
.ti { width: 20px; height: 20px; margin-right: 7px; }
.bold { font-weight: 700; }
.gray { color: #8c8c8c; }
.hscroll { height: 14px; padding: 7px 0 0 22px; background: #f0f0f0; }
.hscroll i { width: 229px; height: 7px; background: #868686; }
.props { display: flex; flex: 579; margin: 6px 4px 0 0; padding: 1px 2px 3px 1px; box-sizing: border-box; border: 1px solid #e2e2e2; }
.propbox { flex: 1; border: 1px solid #828790; background: #fff; }
table { width: 100%; border-collapse: collapse; }
th { height: 32px; padding: 0 0 0 5px; box-sizing: border-box; text-align: left; font-weight: 400; border-right: 1px solid #e2e2e2; }
th:first-child { width: 124px; }
.bottomtabs { display: flex; height: 24px; padding-left: 2px; }
.bottomtabs button { width: 56px; height: 22px; border: 1px solid #e0e0e0; border-top: 0; box-sizing: border-box; background: #f1f1f1; line-height: 16px; }
.bottomtabs .on { line-height: 18px; }

.work { display: flex; flex: 1; flex-direction: column; min-width: 0; }
.scene { position: relative; flex: 1; overflow: hidden; background: linear-gradient(#333366, #9797aa); box-shadow: inset 0 1px #1a1a9c; }
.model { position: absolute; inset: 0; width: 100%; height: 100%; }
.cube { position: absolute; right: 0; top: 1px; width: 158px; height: 147px; }
.cube text { font-family: "Liberation Serif", serif; font-weight: 700; fill: #333; }
.axes { position: absolute; right: 0; bottom: 35px; width: 98px; height: 80px; }
.axes text { font-family: "Liberation Sans", sans-serif; fill: #111; }
.doctabs { display: flex; height: 28px; padding-left: 3px; }
.doc { display: flex; align-items: center; height: 26px; margin-right: 2px; padding: 0 15px 0 12px; box-sizing: border-box; background: #f4f4f4; border-bottom: 2px solid #e3e3e3; }
.doc .logo { margin-right: 6px; }
.doc + .doc { padding-left: 14px; }
.doc.on { height: 28px; margin-left: -2px; background: #fbfbfb; }
.dn { white-space: pre; }
.mono, .status { font: 13px/20px "Liberation Mono", monospace; }
.x { display: flex; align-items: center; justify-content: center; width: 18px; height: 18px; box-sizing: border-box; margin-left: 5px; border: 1px solid #999; border-radius: 2px; background: #bdbdbd; }
.on .x { background: #e07048; border-color: #d03a20; }

.status { display: flex; align-items: center; height: 32px; white-space: nowrap; }
.msg { flex: 1; padding: 8px 0 0 2px; }
.nav { display: flex; align-items: center; align-self: flex-end; width: 123px; height: 25px; padding-left: 16px; box-sizing: border-box; border: solid #cfcfcf; border-width: 0 1px; }
.nav svg { margin-right: -2px; }
.nav .caret { margin-left: 10px; }
.size { width: 172px; padding: 8px 0 0 0; }
.mark { position: absolute; right: 4px; bottom: 14px; color: rgba(226, 226, 228, .85); font: 300 55px/64px "Noto Sans CJK SC", sans-serif; text-shadow: 1px 1px 1px rgba(130, 130, 135, .8), -1px -1px 1px rgba(255, 255, 255, .5); pointer-events: none; white-space: nowrap; }
</style>
